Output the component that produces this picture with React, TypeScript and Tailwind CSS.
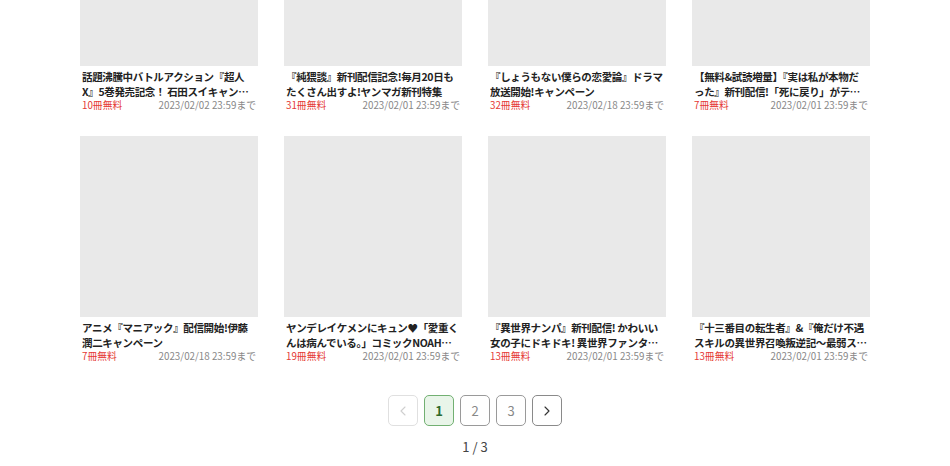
import { ChevronLeft, ChevronRight } from "lucide-react";

interface Campaign {
	id: number;
	title: [string, string];
	free: string;
	until: string;
}

const campaigns: Campaign[] = [
	{
		id: 1,
		title: ["話題沸騰中バトルアクション『超人", "X』5巻発売記念！ 石田スイキャンペーン開催中"],
		free: "10冊無料",
		until: "2023/02/02 23:59まで",
	},
	{
		id: 2,
		title: ["『純猥談』新刊配信記念!毎月20日も", "たくさん出すよ!ヤンマガ新刊特集"],
		free: "31冊無料",
		until: "2023/02/01 23:59まで",
	},
	{
		id: 3,
		title: ["『しょうもない僕らの恋愛論』ドラマ", "放送開始!キャンペーン"],
		free: "32冊無料",
		until: "2023/02/18 23:59まで",
	},
	{
		id: 4,
		title: ["【無料&試読増量】『実は私が本物だ", "った』新刊配信!「死に戻り」がテーマの作品特集"],
		free: "7冊無料",
		until: "2023/02/01 23:59まで",
	},
	{
		id: 5,
		title: ["アニメ『マニアック』配信開始!伊藤", "潤二キャンペーン"],
		free: "7冊無料",
		until: "2023/02/18 23:59まで",
	},
	{
		id: 6,
		title: ["ヤンデレイケメンにキュン♥「愛重く", "んは病んでいる。」コミックNOAH新刊配信"],
		free: "19冊無料",
		until: "2023/02/01 23:59まで",
	},
	{
		id: 7,
		title: ["『異世界ナンパ』新刊配信! かわいい", "女の子にドキドキ! 異世界ファンタジー特集"],
		free: "13冊無料",
		until: "2023/02/01 23:59まで",
	},
	{
		id: 8,
		title: ["『十三番目の転生者』&『俺だけ不遇", "スキルの異世界召喚叛逆記～最弱スキル特集"],
		free: "13冊無料",
		until: "2023/02/01 23:59まで",
	},
];

const CampaignCard: React.FC<{ item: Campaign }> = ({ item }) => (
	<a href="#" className="block w-[178px]">
		<div className="h-[181px] w-full bg-[#e9e9e9]" />
		<div className="mt-[3px] px-[2px] text-[10.5px] font-bold leading-[15px] tracking-[-0.35px] text-[#222]">
			<p className="overflow-hidden whitespace-nowrap">{item.title[0]}</p>
			<p className="truncate">{item.title[1]}</p>
		</div>
		<div className="flex items-center justify-between pl-[2px] pr-[2px] text-[9.8px] leading-[12px]">
			<span className="text-[#e53935]">{item.free}</span>
			<span className="text-[#888]">{item.until}</span>
		</div>
	</a>
);

export default function App() {
	return (
		<div className="min-h-screen bg-white font-['Noto_Sans_CJK_JP','Noto_Sans',sans-serif]">
			{/* Campaign grid (scrolled, first row cut off at top) */}
			<div className="mx-auto mt-[-115px] grid w-[790px] grid-cols-4 gap-x-[26px] gap-y-[25px]">
				{campaigns.map((item) => (
					<CampaignCard key={item.id} item={item} />
				))}
			</div>

			{/* Pagination */}
			<nav className="mt-[33px] flex justify-center gap-[6px]">
				<span className="flex h-[31px] w-[30px] items-center justify-center rounded-[5px] border border-[#e0e0e0] text-[#cfcfcf]">
					<ChevronLeft size={16} strokeWidth={1.6} />
				</span>
				<a
					href="#"
					className="flex h-[31px] w-[30px] items-center justify-center rounded-[5px] border border-[#72b072] bg-[#e9f5e9] text-[13px] font-bold text-[#2e6b2e]"
				>
					1
				</a>
				<a
					href="#"
					className="flex h-[31px] w-[30px] items-center justify-center rounded-[5px] border border-[#9a9a9a] text-[13px] text-[#888]"
				>
					2
				</a>
				<a
					href="#"
					className="flex h-[31px] w-[30px] items-center justify-center rounded-[5px] border border-[#9a9a9a] text-[13px] text-[#888]"
				>
					3
				</a>
				<a
					href="#"
					className="flex h-[31px] w-[30px] items-center justify-center rounded-[5px] border border-[#8a8a8a] text-[#333]"
				>
					<ChevronRight size={16} strokeWidth={1.7} />
				</a>
			</nav>
			<p className="mt-[11px] text-center text-[13px] leading-[20px] text-[#444]">1 / 3</p>
		</div>
	);
}
